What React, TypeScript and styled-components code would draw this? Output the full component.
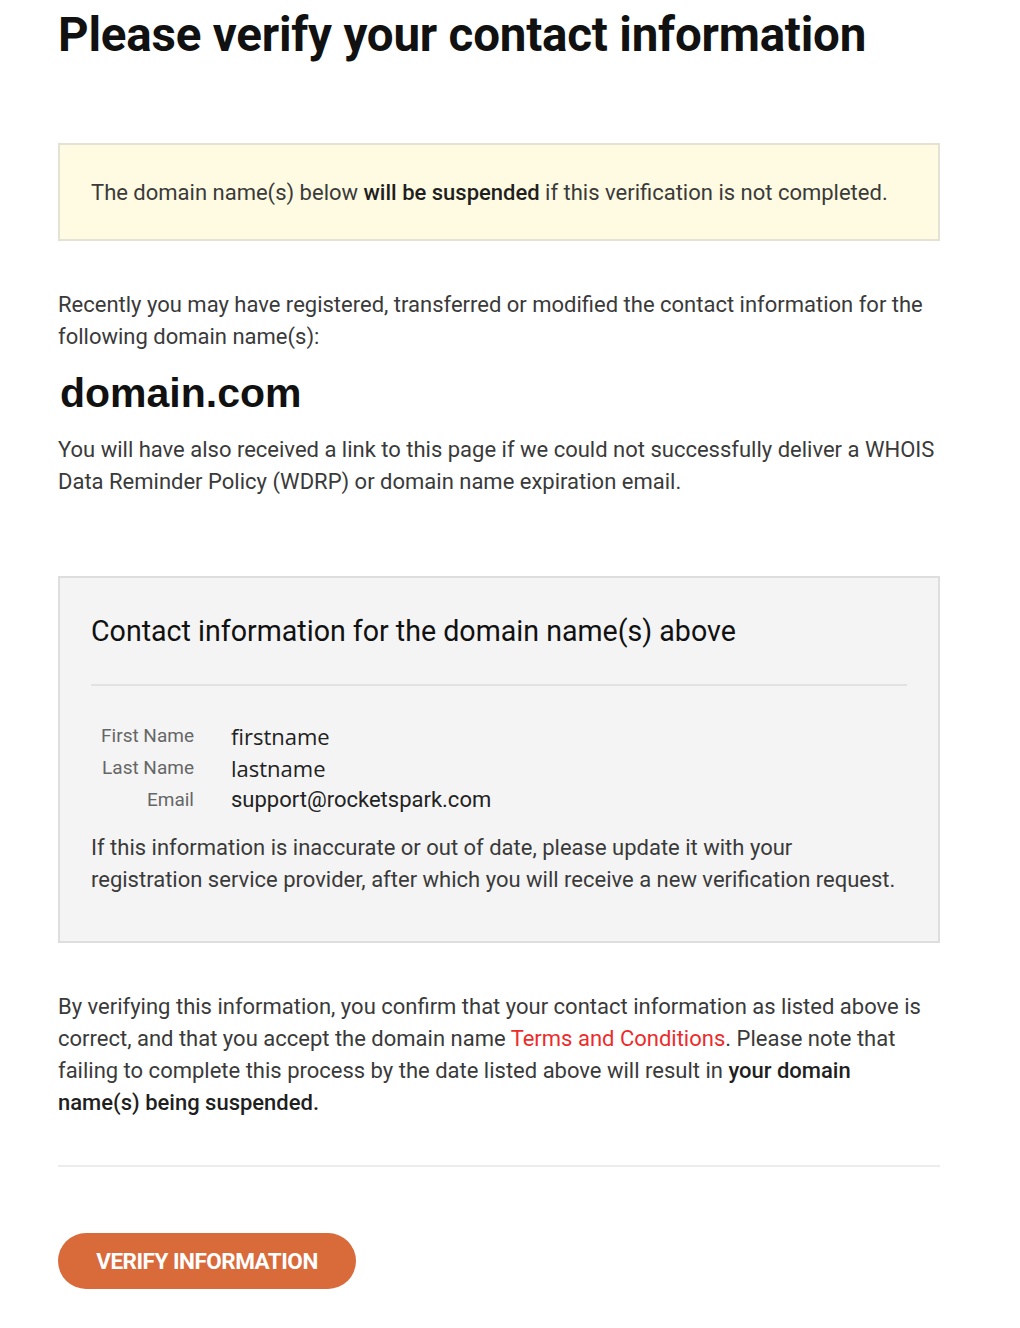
import React from 'react';
import styled, { createGlobalStyle } from 'styled-components';

const GlobalStyle = createGlobalStyle`
  body {
    margin: 0;
    background: #fff;
    font-family: Roboto, "Liberation Sans", sans-serif;
    color: #333;
  }
`;

const Page = styled.div`
  width: 882px;
  margin-left: 58px;
  padding-bottom: 40px;
`;

const Title = styled.h1`
  font-family: Roboto, sans-serif;
  font-weight: 700;
  font-size: 47.5px;
  line-height: 54px;
  color: #111;
  margin: 8px 0 0;
  letter-spacing: -0.2px;
`;

const Notice = styled.div`
  margin-top: 81px;
  background: #fffbe2;
  border: 2px solid #e4e2d4;
  padding: 0 31px;
  height: 94px;
  display: flex;
  align-items: center;
  font-size: 22px;
  color: #3a3a3a;
`;

const Para = styled.p<{ $top?: number; $right?: number }>`
  margin: ${(p) => p.$top ?? 0}px 0 0;
  padding-right: ${(p) => p.$right ?? 0}px;
  font-size: 22px;
  line-height: 32px;
  color: #3a3a3a;
`;

const Strong = styled.b`
  font-weight: 500;
  color: #1f1f1f;
`;

const Domain = styled.div`
  font-family: "Liberation Sans", Arial, sans-serif;
  font-weight: 700;
  font-size: 41px;
  line-height: 50px;
  color: #111;
  margin: 15px 0 16px 2px;
`;

const ContactBox = styled.section`
  margin-top: 78px;
  background: #f4f4f4;
  border: 2px solid #dedede;
  padding: 30px 31px 45px;
`;

const BoxTitle = styled.h2`
  margin: 0;
  font-weight: 400;
  font-size: 28.6px;
  line-height: 46px;
  color: #111;
`;

const Divider = styled.hr`
  border: none;
  border-top: 2px solid #e2e2e2;
  margin: 30px 0 34px;
`;

const Fields = styled.div`
  display: grid;
  grid-template-columns: 103px auto;
  grid-auto-rows: 32px;
  column-gap: 37px;
  align-items: center;
  margin-bottom: 16px;
`;

const Label = styled.div`
  text-align: right;
  font-size: 19px;
  line-height: 32px;
  color: #666;
`;

const Value = styled.div<{ $alt?: boolean }>`
  font-family: ${(p) => (p.$alt ? 'Roboto, sans-serif' : '"Open Sans", sans-serif')};
  font-size: 22px;
  line-height: 32px;
  color: #222;
`;

const Link = styled.a`
  color: #ee2b2b;
  text-decoration: none;
`;

const Rule = styled.hr`
  border: none;
  border-top: 2px solid #ececec;
  margin: 46px 0 0;
`;

const Button = styled.button`
  margin-top: 66px;
  width: 298px;
  height: 56px;
  border: none;
  border-radius: 28px;
  background: #d96a3a;
  color: #fff;
  font-family: Roboto, sans-serif;
  font-weight: 700;
  font-size: 22.5px;
  letter-spacing: -0.5px;
  text-transform: uppercase;
  cursor: pointer;
`;

const fields = [
  { label: 'First Name', value: 'firstname' },
  { label: 'Last Name', value: 'lastname' },
  { label: 'Email', value: 'support@rocketspark.com', alt: true },
];

export default function App() {
  return (
    <>
      <GlobalStyle />
      <Page>
        <Title>Please verify your contact information</Title>
        <Notice>
          <span>
            The domain name(s) below <Strong>will be suspended</Strong> if this verification is not
            completed.
          </span>
        </Notice>
        <Para $top={48}>
          Recently you may have registered, transferred or modified the contact information for the
          following domain name(s):
        </Para>
        <Domain>domain.com</Domain>
        <Para>
          You will have also received a link to this page if we could not successfully deliver a WHOIS
          Data Reminder Policy (WDRP) or domain name expiration email.
        </Para>
        <ContactBox>
          <BoxTitle>Contact information for the domain name(s) above</BoxTitle>
          <Divider />
          <Fields>
            {fields.map((f) => (
              <React.Fragment key={f.label}>
                <Label>{f.label}</Label>
                <Value $alt={f.alt}>{f.value}</Value>
              </React.Fragment>
            ))}
          </Fields>
          <Para>
            If this information is inaccurate or out of date, please update it with your
            registration service provider, after which you will receive a new verification request.
          </Para>
        </ContactBox>
        <Para $top={48} $right={12}>
          By verifying this information, you confirm that your contact information as listed above is
          correct, and that you accept the domain name <Link href="#">Terms and Conditions</Link>.
          Please note that failing to complete this process by the date listed above will result in{' '}
          <Strong>your domain name(s) being suspended.</Strong>
        </Para>
        <Rule />
        <Button>Verify Information</Button>
      </Page>
    </>
  );
}
